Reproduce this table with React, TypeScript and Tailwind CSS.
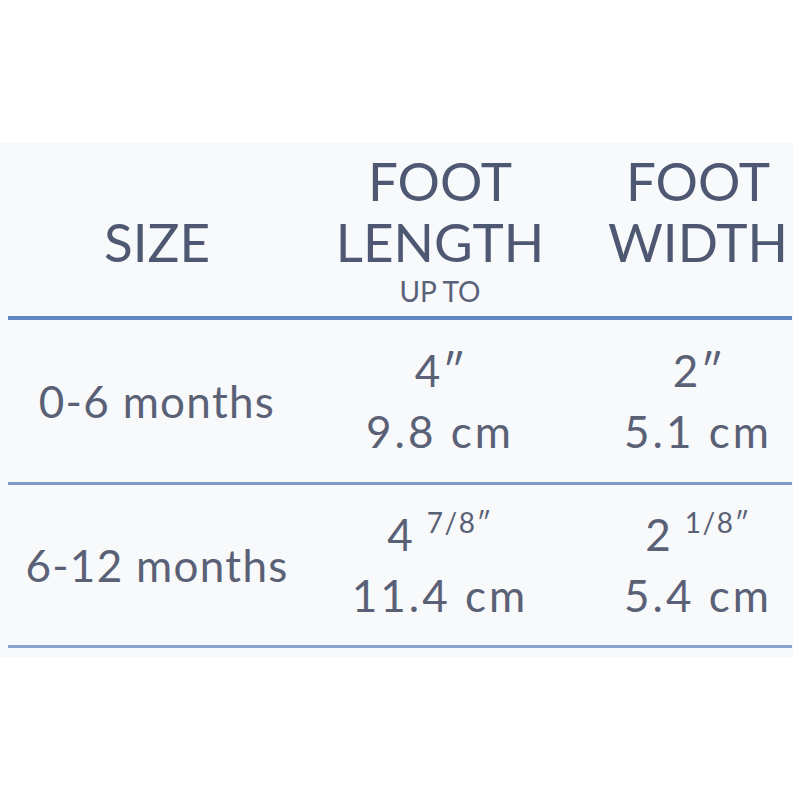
import React from 'react';

type Row = {
  label: string;
  length: { whole: string; frac?: string; cm: string };
  width: { whole: string; frac?: string; cm: string };
};

const ROWS: Row[] = [
  { label: '0-6 months', length: { whole: '4', cm: '9.8 cm' }, width: { whole: '2', cm: '5.1 cm' } },
  {
    label: '6-12 months',
    length: { whole: '4', frac: '7/8', cm: '11.4 cm' },
    width: { whole: '2', frac: '1/8', cm: '5.4 cm' },
  },
];

const GRID = 'grid grid-cols-[314px_252px_264px]';

function Inches({ whole, frac }: { whole: string; frac?: string }) {
  if (!frac) {
    return (
      <span>
        {whole}
        <span className="ml-[2px]">″</span>
      </span>
    );
  }
  return (
    <span className="flex items-start justify-center">
      <span>{whole}</span>
      <span className="ml-[14px] mt-[-2px] text-[28px] leading-[40px] tracking-[1.5px]">{frac}″</span>
    </span>
  );
}

function Measure({ whole, frac, cm }: { whole: string; frac?: string; cm: string }) {
  return (
    <div className="flex flex-col items-center text-[44px] leading-[61px]">
      <Inches whole={whole} frac={frac} />
      <span className="tracking-[3px]">{cm}</span>
    </div>
  );
}

export default function App() {
  return (
    <div className="w-[800px] h-[800px] pt-[143px] bg-white" style={{ fontFamily: 'Lato, "Noto Sans", sans-serif' }}>
      <div className="w-[793px] h-[514px] bg-[#f8f9fa] overflow-hidden">
        {/* header */}
        <div className={`${GRID} h-[173px] pt-[7px] text-[53px] leading-[61px] text-[#4f5872]`}>
          <div className="flex justify-center pt-[61px]">SIZE</div>
          <div className="flex flex-col items-center">
            <span>FOOT</span>
            <span>LENGTH</span>
            <span className="mt-[4px] text-[28px] leading-[30px] text-[#5a6279]">UP TO</span>
          </div>
          <div className="flex flex-col items-center">
            <span>FOOT</span>
            <span>WIDTH</span>
          </div>
        </div>
        <div className="ml-2 w-[784px] h-[4px] bg-[#6288c2]" />

        {ROWS.map((row, i) => (
          <div key={row.label}>
            <div className={`${GRID} ${i === 0 ? 'h-[162px]' : 'h-[160px]'} items-center text-[#5a6176]`}>
              <div className="flex justify-center text-[44px] leading-[61px] tracking-[1.3px]">{row.label}</div>
              <Measure {...row.length} />
              <Measure {...row.width} />
            </div>
            <div className={`ml-2 w-[784px] h-[3px] ${i === 0 ? 'bg-[#7f9bc9]' : 'bg-[#8aa3ce]'}`} />
          </div>
        ))}
      </div>
    </div>
  );
}
